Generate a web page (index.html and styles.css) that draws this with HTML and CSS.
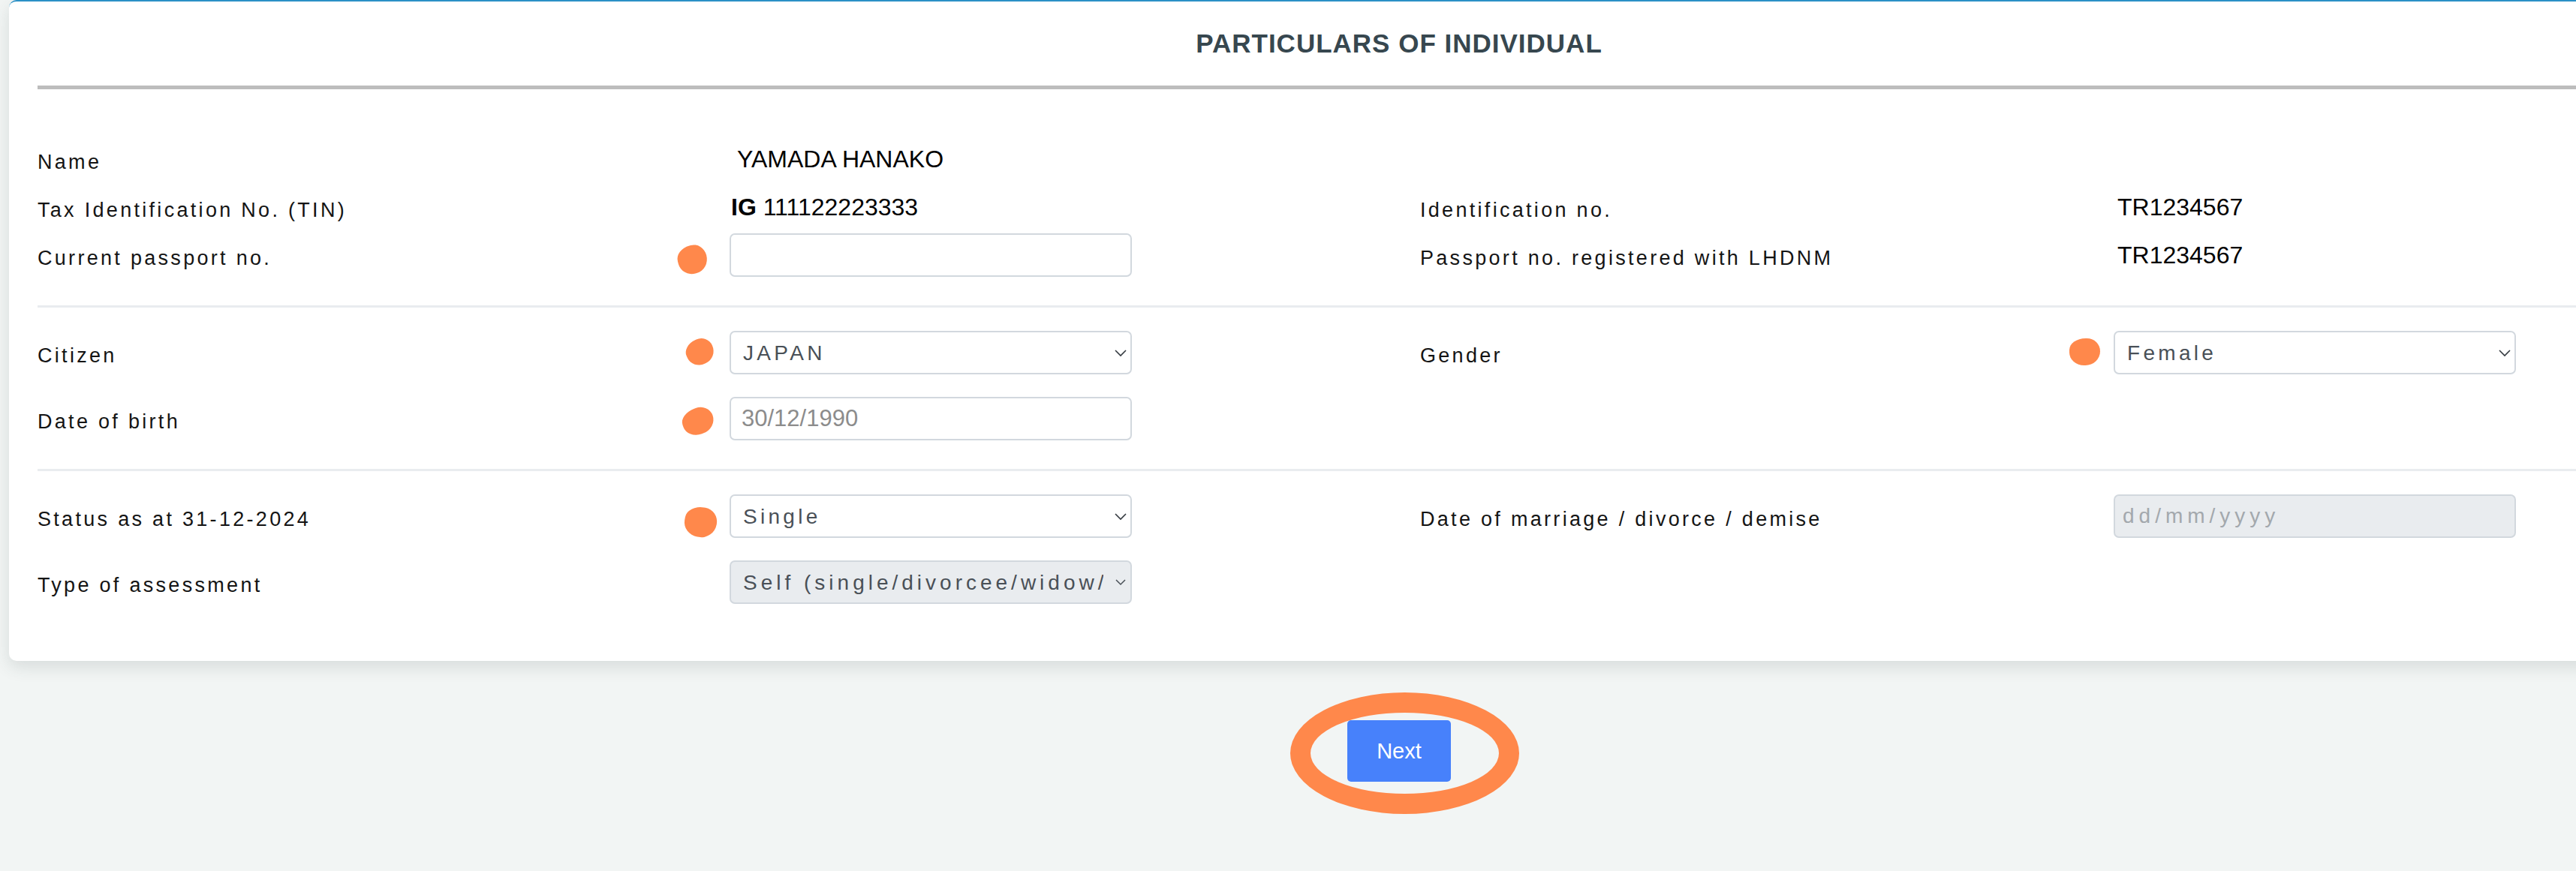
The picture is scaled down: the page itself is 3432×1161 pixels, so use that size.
FILE: index.html
```html
<!DOCTYPE html>
<html lang="en">
<head>
    <meta charset="UTF-8">
    <meta name="viewport" content="width=device-width, initial-scale=1.0">
    <title>Particulars of Individual</title>
    <link rel="stylesheet" href="styles.css">
</head>
<body>
    <div class="page">
        <div class="card">
            <div class="card-header">
                <h2>PARTICULARS OF INDIVIDUAL</h2>
            </div>

            <!-- identity -->
            <div class="section section-first">
                <div class="label">Name</div>
                <div class="value value-name">YAMADA HANAKO</div>
                <div></div>
                <div></div>

                <div class="label">Tax Identification No. (TIN)</div>
                <div class="value"><strong>IG</strong> 111122223333</div>
                <div class="label">Identification no.</div>
                <div class="value value-right">TR1234567</div>

                <div class="label">Current passport no.</div>
                <div class="field">
                    <span class="mark mark-passport"></span>
                    <input type="text" class="control">
                </div>
                <div class="label">Passport no. registered with LHDNM</div>
                <div class="value value-right">TR1234567</div>
            </div>

            <!-- citizenship -->
            <div class="section">
                <div class="label">Citizen</div>
                <div class="field">
                    <span class="mark mark-citizen"></span>
                    <select class="control select">
                        <option>JAPAN</option>
                    </select>
                    <svg class="chevron" width="16" height="10" viewBox="0 0 16 10"><polyline points="1,1 8,8 15,1" fill="none" stroke="#343a40" stroke-width="1.6"/></svg>
                </div>
                <div class="label">Gender</div>
                <div class="field">
                    <span class="mark mark-gender"></span>
                    <select class="control select">
                        <option>Female</option>
                    </select>
                    <svg class="chevron" width="16" height="10" viewBox="0 0 16 10"><polyline points="1,1 8,8 15,1" fill="none" stroke="#343a40" stroke-width="1.6"/></svg>
                </div>

                <div class="label">Date of birth</div>
                <div class="field">
                    <span class="mark mark-dob"></span>
                    <input type="text" class="control date-value" value="30/12/1990">
                </div>
                <div></div>
                <div></div>
            </div>

            <!-- marital status -->
            <div class="section section-last">
                <div class="label">Status as at 31-12-2024</div>
                <div class="field">
                    <span class="mark mark-status"></span>
                    <select class="control select">
                        <option>Single</option>
                    </select>
                    <svg class="chevron" width="16" height="10" viewBox="0 0 16 10"><polyline points="1,1 8,8 15,1" fill="none" stroke="#343a40" stroke-width="1.6"/></svg>
                </div>
                <div class="label">Date of marriage / divorce / demise</div>
                <div class="field">
                    <input type="text" class="control date-empty" placeholder="dd/mm/yyyy" disabled>
                </div>

                <div class="label">Type of assessment</div>
                <div class="field">
                    <select class="control select select-assess" disabled>
                        <option>Self (single/divorcee/widow/widower)</option>
                    </select>
                    <svg class="chevron chevron-small" width="14" height="9" viewBox="0 0 14 9"><polyline points="1,1 7,7 13,1" fill="none" stroke="#495057" stroke-width="1.5"/></svg>
                </div>
                <div></div>
                <div></div>
            </div>
        </div>

        <div class="actions">
            <div class="btn-wrap">
                <span class="ring"></span>
                <button class="btn-next">Next</button>
            </div>
        </div>
    </div>
</body>
</html>
```

FILE: styles.css
```css
html {
    background: #f2f5f4;
}
body {
    margin: 0;
    height: 1161px;
    overflow: hidden;
    font-family: 'Liberation Sans', Arial, Helvetica, sans-serif;
    color: #141414;
}
.page {
    width: 3704px;
    margin-left: 12px;
}
.card {
    background: #fff;
    border-top: 2px solid #2b90c6;
    border-radius: 10px;
    box-shadow: 0 8px 22px rgba(50, 70, 70, 0.14);
    padding: 0 38px;
}
.card-header {
    padding: 35px 0;
    border-bottom: 5px solid #bdbdbd;
    text-align: center;
}
.card-header h2 {
    margin: 0;
    font-size: 35px;
    line-height: 42px;
    font-weight: 700;
    letter-spacing: 1px;
    color: #37474f;
}
.section {
    display: grid;
    grid-template-columns: 922px 920px 924px 536px;
    grid-auto-rows: 58px;
    row-gap: 30px;
    align-items: center;
    padding: 31px 0 38px;
    border-top: 3px solid #e9ecef;
}
.section-first {
    border-top: none;
    padding-top: 64px;
    row-gap: 6px;
}
.section-last {
    padding-bottom: 76px;
}
.label {
    font-size: 27px;
    letter-spacing: 3.3px;
    padding-top: 8px;
    color: #141414;
    white-space: nowrap;
}
.value {
    font-size: 32px;
    color: #000;
    padding-left: 2px;
    white-space: nowrap;
}
.value-name {
    padding-left: 10px;
}
.value-right {
    padding-left: 5px;
}
.field {
    position: relative;
    width: 536px;
    height: 58px;
}
.control {
    box-sizing: border-box;
    width: 100%;
    height: 58px;
    margin: 0;
    border: 2px solid #d2d8de;
    border-radius: 7px;
    background: #fff;
    font-family: 'Liberation Sans', Arial, sans-serif;
    font-size: 28px;
    letter-spacing: 4.3px;
    color: #495057;
    padding: 0 16px;
    outline: none;
}
.select {
    appearance: none;
    -webkit-appearance: none;
    padding-right: 40px;
}
.select-assess {
    letter-spacing: 5px;
    padding-right: 36px;
}
.control:disabled {
    background: #e9ecef;
    opacity: 1;
    color: #495057;
}
.chevron {
    position: absolute;
    right: 7px;
    top: 25px;
    pointer-events: none;
}
.chevron-small {
    right: 8px;
    top: 25px;
}
.date-value {
    font-size: 31px;
    letter-spacing: 0;
    color: #8c8c8c;
    padding-left: 14px;
}
.date-empty {
    padding-left: 10px;
    letter-spacing: 6px;
}
.date-empty::placeholder {
    color: #a3a8ad;
}

/* annotation marks */
.mark {
    position: absolute;
    background: #ff884b;
    border-radius: 55% 45% 50% 50% / 45% 50% 55% 50%;
}
.mark-passport {
    left: -69px;
    top: 16px;
    width: 39px;
    height: 38px;
    transform: rotate(-15deg);
}
.mark-citizen {
    left: -58px;
    top: 11px;
    width: 37px;
    height: 34px;
    transform: rotate(-25deg);
}
.mark-dob {
    left: -63px;
    top: 15px;
    width: 42px;
    height: 35px;
    transform: rotate(-20deg);
}
.mark-status {
    left: -60px;
    top: 17px;
    width: 43px;
    height: 40px;
    transform: rotate(10deg);
}
.mark-gender {
    left: -59px;
    top: 10px;
    width: 41px;
    height: 36px;
}

.actions {
    display: flex;
    justify-content: center;
    padding-top: 79px;
}
.btn-wrap {
    position: relative;
}
.btn-next {
    display: block;
    width: 138px;
    height: 82px;
    border: none;
    border-radius: 5px;
    background: #4781fb;
    color: #fff;
    font-family: 'Liberation Sans', Arial, sans-serif;
    font-size: 29px;
    cursor: pointer;
}
.ring {
    position: absolute;
    left: -76px;
    top: -37px;
    width: 305px;
    height: 162px;
    box-sizing: border-box;
    border: 27px solid #ff884b;
    border-radius: 50%;
    pointer-events: none;
}
```
